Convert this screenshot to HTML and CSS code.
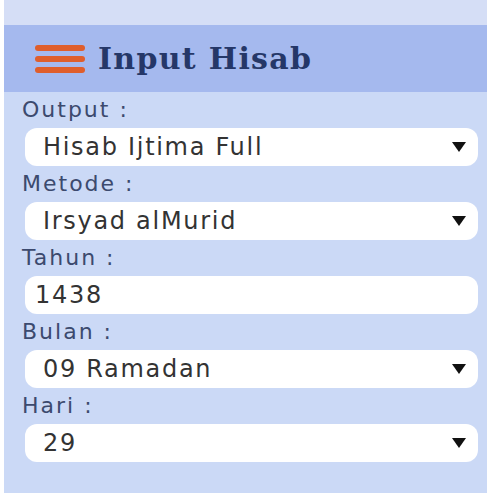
FILE: index.html
```html
<!DOCTYPE html>
<html lang="id">
  <head>
    <meta charset="UTF-8" />
    <meta name="viewport" content="width=device-width, initial-scale=1.0" />
    <title>Input Hisab</title>
    <link rel="stylesheet" href="styles.css">
  </head>
  <body>
    <div class="panel">
      <div class="panel-top"></div>
      <!-- Header -->
      <div class="panel-header">
        <svg class="menu-icon" width="52" height="32" viewBox="0 0 52 32">
          <rect x="1" y="2" width="50" height="6" rx="3" fill="#df5e2c" />
          <rect x="1" y="13" width="50" height="6" rx="3" fill="#df5e2c" />
          <rect x="1" y="24" width="50" height="6" rx="3" fill="#df5e2c" />
        </svg>
        <h2>Input Hisab</h2>
      </div>

      <form class="panel-body">
        <label for="output">Output :</label>
        <div class="select-wrap">
          <select id="output">
            <option>Hisab Ijtima Full</option>
          </select>
          <svg class="arrow" width="14" height="10" viewBox="0 0 14 10"><path d="M0 0H14L7 10Z" fill="#111" /></svg>
        </div>

        <label for="metode">Metode :</label>
        <div class="select-wrap">
          <select id="metode">
            <option>Irsyad alMurid</option>
          </select>
          <svg class="arrow" width="14" height="10" viewBox="0 0 14 10"><path d="M0 0H14L7 10Z" fill="#111" /></svg>
        </div>

        <label for="tahun">Tahun :</label>
        <input id="tahun" type="text" value="1438" />

        <label for="bulan">Bulan :</label>
        <div class="select-wrap">
          <select id="bulan">
            <option>09 Ramadan</option>
          </select>
          <svg class="arrow" width="14" height="10" viewBox="0 0 14 10"><path d="M0 0H14L7 10Z" fill="#111" /></svg>
        </div>

        <label for="hari">Hari :</label>
        <div class="select-wrap">
          <select id="hari">
            <option>29</option>
          </select>
          <svg class="arrow" width="14" height="10" viewBox="0 0 14 10"><path d="M0 0H14L7 10Z" fill="#111" /></svg>
        </div>
      </form>
    </div>
  </body>
</html>
```

FILE: styles.css
```css
body {
  margin: 0;
  padding: 0;
  background: #fff;
  font-family: "DejaVu Sans", Verdana, sans-serif;
}

.panel {
  margin: 0 3px 0 4px;
  background: #cbd9f6;
}

.panel-top {
  height: 25px;
  background: #d5def6;
}

/* Header */
.panel-header {
  height: 67px;
  display: flex;
  align-items: center;
  gap: 12px;
  padding-left: 30px;
  background: #a5b9ee;
}

.panel-header h2 {
  margin: 0;
  font-family: "DejaVu Serif", Georgia, serif;
  font-weight: bold;
  font-size: 30px;
  letter-spacing: 1.3px;
  color: #253768;
}

/* Form */
.panel-body {
  display: flex;
  flex-direction: column;
  padding: 0 9px 31px 18px;
}

label {
  height: 36px;
  line-height: 36px;
  font-size: 22px;
  letter-spacing: 2px;
  color: #3c4a6e;
}

.select-wrap {
  position: relative;
  margin-left: 3px;
}

select,
input {
  display: block;
  width: 100%;
  height: 38px;
  box-sizing: border-box;
  border: none;
  outline: none;
  border-radius: 12px;
  background: #fff;
  font-family: "DejaVu Sans", Verdana, sans-serif;
  font-size: 24px;
  letter-spacing: 1.7px;
  color: #333;
}

select {
  appearance: none;
  -webkit-appearance: none;
  padding: 0 40px 0 18px;
}

input {
  margin-left: 3px;
  width: calc(100% - 3px);
  padding: 0 10px;
}

.arrow {
  position: absolute;
  right: 12px;
  top: 14px;
  pointer-events: none;
}
```
